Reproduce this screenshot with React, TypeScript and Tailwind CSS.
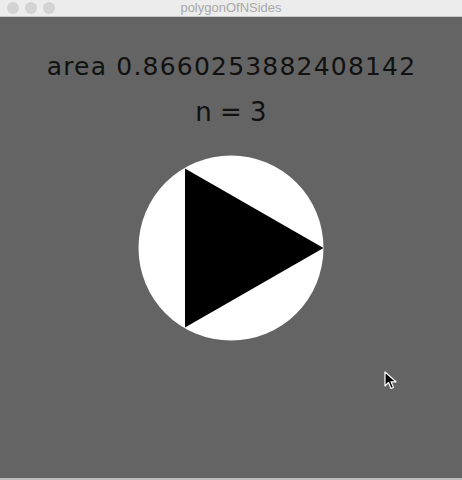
export default function App() {
  return (
    <div className="relative flex h-[480px] w-[462px] flex-col overflow-hidden bg-[#646464]">
      {/* title bar */}
      <div className="relative flex h-[17px] items-center border-b border-[#c8c8c8] bg-[#ececec]">
        <div className="flex gap-[6px] pl-[7px]">
          <span className="h-[12px] w-[12px] rounded-full bg-[#d3d3d3]" />
          <span className="h-[12px] w-[12px] rounded-full bg-[#d3d3d3]" />
          <span className="h-[12px] w-[12px] rounded-full bg-[#d3d3d3]" />
        </div>
        <div className="absolute inset-0 flex items-center justify-center font-['Liberation_Sans',sans-serif] text-[13px] text-[#a8a8a8]">
          polygonOfNSides
        </div>
      </div>

      {/* sketch canvas */}
      <div className="flex flex-1 flex-col items-center font-['DejaVu_Sans',sans-serif] text-[#111]">
        <div className="mt-[35px] h-[30px] pl-[1px] text-[25px] leading-[30px] tracking-[1.2px]">
          area 0.8660253882408142
        </div>
        <div className="mt-[14px] h-[32px] text-[26px] leading-[32px]">n = 3</div>
        <svg className="mt-[27px]" width="186" height="186" viewBox="0 0 186 186">
          <circle cx="93" cy="93" r="92.5" fill="#fff" />
          <polygon points="47,13.5 185.5,93 47,172.5" fill="#000" />
        </svg>
      </div>
      <div className="h-[2px] bg-[#bcbcbc]" />

      {/* mouse pointer */}
      <svg className="absolute left-[384px] top-[371px]" width="14" height="20" viewBox="0 0 14 20">
        <path d="M1 1 L1 15 L4.5 11.5 L7 17.5 L9.5 16.5 L7 10.8 L12 10.8 Z" fill="#000" stroke="#fff" strokeWidth="1.2" strokeLinejoin="round" />
      </svg>
    </div>
  );
}
